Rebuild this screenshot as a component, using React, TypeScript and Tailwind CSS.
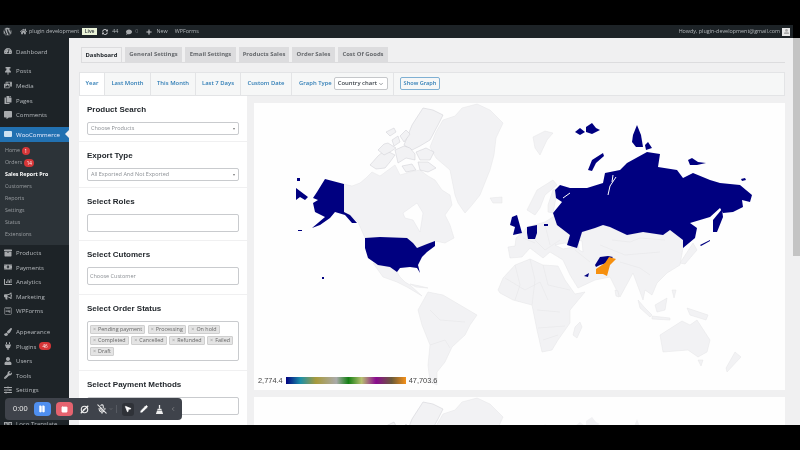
import { ChevronDown, ChevronLeft, MicOff, MousePointer2, Pause, Pencil, Square } from "lucide-react";
import type { IconType } from "react-icons";
import {
  FaArchive, FaBullhorn, FaChartBar, FaComment, FaCommentAlt, FaCopy, FaHome, FaLanguage, FaMoneyBillAlt,
  FaPaintBrush, FaPhotoVideo, FaPlug, FaPlus, FaSlidersH, FaSyncAlt, FaTachometerAlt, FaThumbtack, FaUser,
  FaUserAlt, FaWordpress, FaWrench, FaWpforms,
} from "react-icons/fa";

const sans = "font-['Open_Sans',sans-serif]";
const head = "font-['Liberation_Sans',Arial,sans-serif]";

type MenuRow = { label: string; icon: IconType; badge?: string };

const group1: MenuRow[] = [
  { label: "Posts", icon: FaThumbtack },
  { label: "Media", icon: FaPhotoVideo },
  { label: "Pages", icon: FaCopy },
  { label: "Comments", icon: FaCommentAlt },
];
const group2: MenuRow[] = [
  { label: "Products", icon: FaArchive },
  { label: "Payments", icon: FaMoneyBillAlt },
  { label: "Analytics", icon: FaChartBar },
  { label: "Marketing", icon: FaBullhorn },
  { label: "WPForms", icon: FaWpforms },
];
const group3: MenuRow[] = [
  { label: "Appearance", icon: FaPaintBrush },
  { label: "Plugins", icon: FaPlug, badge: "46" },
  { label: "Users", icon: FaUser },
  { label: "Tools", icon: FaWrench },
  { label: "Settings", icon: FaSlidersH },
];
const submenu = [
  { label: "Home", badge: "1" },
  { label: "Orders", badge: "14" },
  { label: "Sales Report Pro", active: true },
  { label: "Customers" },
  { label: "Reports" },
  { label: "Settings" },
  { label: "Status" },
  { label: "Extensions" },
];
const tabs = [
  { label: "General Settings", w: "w-[57px]" },
  { label: "Email Settings", w: "w-[51px]" },
  { label: "Products Sales", w: "w-[50px]" },
  { label: "Order Sales", w: "w-[43px]" },
  { label: "Cost Of Goods", w: "w-[50px]" },
];
const ranges = [
  { label: "Last Month", w: "w-[46px]" },
  { label: "This Month", w: "w-[45px]" },
  { label: "Last 7 Days", w: "w-[45px]" },
  { label: "Custom Date", w: "w-[51px]" },
];
const statuses = ["Pending payment", "Processing", "On hold", "Completed", "Cancelled", "Refunded", "Failed", "Draft"];

// rough outlines, in page pixels of the first chart panel
const land = [
  "344,184 352,186 360,183 366,178 372,172 380,176 395,165 400,175 410,172 420,170 428,176 435,180 442,190 450,195 452,205 445,215 450,225 454,238 445,243 435,241 427,244 417,248 413,243 407,238 365,238 358,222 350,215 344,212",
  "430,147 436,132 443,120 455,116 462,108 477,104 490,110 503,123 496,138 494,155 490,170 484,185 480,195 472,205 465,213 458,203 455,195 450,170 436,158",
  "490,198 502,197 502,203 493,203",
  "373,263 383,277 397,282 407,287 422,296 410,285 405,282 400,277 397,272 390,267 378,265",
  "410,284 420,286 428,288 416,287",
  "428,292 443,295 460,305 477,315 470,325 465,335 452,347 445,362 437,372 437,385 430,382 428,365 430,345 422,325 418,310",
  "498,290 503,278 515,265 530,259 543,265 558,266 565,280 575,294 585,292 570,310 570,323 558,340 552,350 542,352 537,330 532,305 513,300 500,293",
  "580,322 582,327 577,338 573,335 575,327",
  "508,247 515,246 516,238 523,232 527,227 545,222 556,215 557,225 570,235 567,245 577,248 582,232 595,228 603,225 610,227 627,235 643,232 663,235 670,230 683,240 683,248 680,265 667,273 657,283 652,295 645,290 643,300 633,273 620,297 610,277 595,280 578,288 570,275 563,260 550,252 543,258 530,248 522,257 510,258",
  "527,210 537,190 553,180 557,185 545,195 540,208 535,215",
  "548,205 553,190 558,188 556,198 553,213 548,212",
  "533,137 545,131 553,133 547,140 540,155 535,148",
  "693,243 697,250 685,264 680,263",
  "660,335 682,321 690,325 697,320 710,340 707,352 698,357 688,350 663,352",
  "698,360 703,360 701,366",
  "735,352 741,357 727,372 726,368",
  "638,300 645,308 652,315 650,317 640,308",
  "655,305 667,298 665,310 657,312",
  "652,316 670,318 670,320 652,319",
  "687,308 708,315 706,320 690,315",
  "672,290 676,290 674,298",
  "615,290 618,291 619,297 616,296",
];
// arctic islands of Canada, drawn with a darker coast
const arctic = [
  "423,108 433,110 443,115 438,125 430,140 420,146 412,150 404,145 408,135 412,125",
  "370,165 378,156 385,150 395,155 390,162 385,168 376,169",
  "395,150 404,146 410,148 415,154 415,160 406,158 398,163",
  "378,150 384,144 388,143 396,148 390,152 384,155",
  "400,136 406,130 410,134 404,142",
  "392,140 398,136 400,142 394,146",
  "416,152 426,148 434,152 430,160 420,160",
  "418,162 428,162 436,168 428,172 420,170",
  "402,166 412,164 416,170 406,172",
  "386,132 394,128 396,132 390,136",
];
const blue = [
  "365,238 380,237 407,238 413,243 417,248 427,244 435,241 435,246 427,252 422,257 418,265 420,273 417,268 410,267 400,268 397,272 390,267 378,265 368,258 365,248",
  "325,179 344,184 344,212 350,215 357,223 352,223 345,215 335,212 330,218 320,225 312,228 325,217 315,212 313,203 318,200 313,198 317,192",
  "296,188 308,197 305,200 300,197 296,200",
  "555,190 560,185 570,188 587,188 603,183 605,173 620,170 627,163 647,152 660,154 658,167 677,170 683,178 693,173 710,180 720,183 740,185 752,195 750,202 742,200 743,207 733,212 723,213 720,208 710,217 690,223 697,228 695,238 683,248 683,240 670,230 663,235 643,232 627,235 610,227 603,225 595,228 582,232 577,248 567,245 570,235 557,225 553,213 562,202 556,198",
  "722,209 723,217 717,232 713,232 713,220",
  "588,170 592,160 603,153 604,156 596,163 592,171",
  "633,135 637,125 641,135 643,147 636,147 632,142",
  "645,145 648,142 652,148 646,150",
  "575,132 580,128 585,132 580,135",
  "586,127 592,123 596,128 600,130 592,134 586,132",
  "688,160 692,158 698,162 706,163 697,165 690,165",
  "700,245 710,240 710,241 701,246",
  "741,179 745,178 746,180 742,181",
  "512,217 517,215 522,233 513,235 515,227 510,225",
  "527,227 537,225 537,233 535,239 528,239 527,233",
  "544,224 548,224 548,226 544,226",
  "595,265 600,257 608,256 613,257 607,263 600,265 596,267",
  "584,276 589,273 588,277",
];
const orange = "596,269 605,263 609,257 616,259 610,265 607,276 603,274 596,274";
const white = [
  "403,213 417,203 423,213 420,232 413,220 405,218",
  "555,245 565,243 573,247 563,249",
  "578,240 582,241 583,252 579,250",
];
const inlets = ["608,195 610,186 616,177", "563,198 570,193", "612,182 613,175"];
const borders = [
  "505,278 525,290 540,282 548,300",
  "515,265 520,285 515,300",
  "530,259 535,280 532,305",
  "543,265 548,285 570,290",
  "537,310 560,312",
  "538,328 565,326",
  "543,340 558,335",
  "600,245 625,255 660,252",
  "620,262 640,268 650,275",
  "535,240 545,250 560,240",
  "523,238 535,243",
  "545,225 550,245",
  "575,250 590,262",
  "430,310 440,320 465,322",
  "430,345 445,340 450,348",
  "612,240 630,242 640,238 665,240",
];

const WorldMap = ({ colored = true }: { colored?: boolean }) => {
  const mark = (c: string) => (colored ? c : "#f1f1f3");
  return (
    <svg viewBox="254 103 531 287" className="block w-[531px] h-[287px] shrink-0">
      <g fill="#f2f2f4" stroke="#e4e4e7" strokeWidth="0.5">
        {land.map((p) => <polygon key={p} points={p} />)}
      </g>
      <g fill="#f2f2f4" stroke="#cdcdd2" strokeWidth="0.5">
        {arctic.map((p) => <polygon key={p} points={p} />)}
      </g>
      <g fill="none" stroke="#e4e4e7" strokeWidth="0.5">
        {borders.map((p) => <polyline key={p} points={p} />)}
      </g>
      <g fill="#fefefe" stroke="#dedee2" strokeWidth="0.4">
        {white.map((p) => <polygon key={p} points={p} />)}
      </g>
      <g fill={mark("#000080")}>
        {blue.map((p) => <polygon key={p} points={p} />)}
        <rect x="297" y="178" width="3" height="3" />
        <rect x="298" y="230" width="4" height="1" />
        <rect x="322" y="277" width="2" height="2" />
      </g>
      {colored && (
        <g fill="none" stroke="#fefefe" strokeWidth="1">
          {inlets.map((p) => <polyline key={p} points={p} />)}
        </g>
      )}
      <polygon points={orange} fill={mark("#f6900f")} />
    </svg>
  );
};

const SideRow = ({ row }: { row: MenuRow }) => (
  <div className="h-[14.6px] shrink-0 flex items-center text-[#b4b8bc] text-[6.1px]">
    <row.icon className="w-[8px] h-[8px] ml-[4px] mr-[4px] text-[#a7aaad]" />
    <span>{row.label}</span>
    {row.badge && (
      <span className="ml-[3px] px-[3px] h-[8px] leading-[8px] rounded-full bg-[#d63638] text-white text-[4.5px]">{row.badge}</span>
    )}
  </div>
);

const Card = ({ title, children, className = "" }: { title: string; children?: React.ReactNode; className?: string }) => (
  <div className={`bg-white px-[8px] pt-[9px] shrink-0 ${className}`}>
    <div className={`${head} font-bold text-[8px] text-[#23282d] leading-[10px] mb-[7px]`}>{title}</div>
    {children}
  </div>
);

const SelectBox = ({ text }: { text: string }) => (
  <div className="h-[13px] border border-[#c9cbce] rounded-[2px] flex items-center justify-between pl-[3px] pr-[3px] text-[5.5px] text-[#8b8f94] bg-white">
    <span>{text}</span>
    <span className="w-0 h-0 border-x-[1.5px] border-x-transparent border-t-[2px] border-t-[#777]" />
  </div>
);

const App = () => (
  <div className={`${sans} w-[800px] h-[450px] bg-black overflow-hidden flex flex-col relative blur-[0.3px]`}>
    <div className="h-[25px] shrink-0" />
    <div className="h-[400px] shrink-0 flex">
      <div className="w-[793px] flex flex-col">
        {/* Admin bar */}
        <div className="h-[13px] shrink-0 bg-[#1d2327] text-[#b4b8bc] text-[5.4px] flex items-center">
          <FaWordpress className="w-[9px] h-[9px] ml-[3px] text-[#a7aaad]" />
          <FaHome className="w-[7px] h-[7px] ml-[8px] text-[#a7aaad]" />
          <span className="ml-[2px]">plugin development</span>
          <span className="ml-[3px] w-[15px] text-center h-[7px] leading-[7px] bg-[#eaf3d8] text-[#2c3338] font-semibold text-[5px]">Live</span>
          <FaSyncAlt className="w-[6px] h-[6px] ml-[5px] text-[#c3c4c7]" />
          <span className="ml-[4px]">44</span>
          <FaComment className="w-[6px] h-[6px] ml-[8px] text-[#a7aaad]" />
          <span className="ml-[3px] text-[#6b7075]">0</span>
          <FaPlus className="w-[6px] h-[6px] ml-[8px] text-[#c3c4c7]" />
          <span className="ml-[4px]">New</span>
          <span className="ml-[7px]">WPForms</span>
          <span className="ml-auto">Howdy, plugin-development@gmail.com</span>
          <span className="w-[8px] h-[8px] ml-[2px] mr-[3px] bg-[#e8e8e8] flex items-center justify-center">
            <FaUserAlt className="w-[5px] h-[5px] text-[#aaa]" />
          </span>
        </div>

        <div className="flex-1 flex min-h-0">
          {/* Sidebar */}
          <div className="w-[69px] shrink-0 bg-[#1d2327] overflow-hidden pt-[6px] flex flex-col">
            <SideRow row={{ label: "Dashboard", icon: FaTachometerAlt }} />
            <div className="h-[5px] shrink-0" />
            {group1.map((r) => <SideRow key={r.label} row={r} />)}
            <div className="h-[5px] shrink-0" />
            <div className="h-[14.6px] shrink-0 bg-[#2271b1] text-[#eef] text-[6.1px] flex items-center relative">
              <span className="w-[8px] h-[6px] ml-[4px] mr-[4px] bg-[#cfe3f2] rounded-[1px]" />
              WooCommerce
              <span className="absolute right-0 w-0 h-0 border-y-[4px] border-y-transparent border-r-[4px] border-r-[#f0f0f1]" />
            </div>
            <div className="bg-[#2c3338] pt-[3px] pb-[4px] shrink-0">
              {submenu.map((s) => (
                <div key={s.label} className={`h-[12.1px] flex items-center pl-[5px] text-[5.3px] ${s.active ? "text-white font-bold" : "text-[#9a9ea2]"}`}>
                  {s.label}
                  {s.badge && (
                    <span className="ml-[2px] px-[2.5px] h-[8px] leading-[8px] rounded-full bg-[#d63638] text-white text-[4.5px]">{s.badge}</span>
                  )}
                </div>
              ))}
            </div>
            {group2.map((r) => <SideRow key={r.label} row={r} />)}
            <div className="h-[6px] shrink-0" />
            {group3.map((r) => <SideRow key={r.label} row={r} />)}
            <div className="h-[19.4px] shrink-0" />
            <SideRow row={{ label: "Loco Translate", icon: FaLanguage }} />
          </div>

          {/* Content */}
          <div className="flex-1 min-w-0 bg-[#f0f0f1] pt-[9px] pl-[10px] pr-[8px] overflow-hidden">
            <div className="ml-[2px] h-[15.5px] flex gap-[3px] border-b border-[#dcdcde] text-[5.9px] font-bold">
              <div className="w-[41px] text-center h-[15.5px] leading-[14px] border border-b-0 border-[#dcdcde] text-[#23282d]">Dashboard</div>
              {tabs.map((t) => (
                <div key={t.label} className={`${t.w} text-center h-[15px] leading-[14px] bg-[#dcdcde] text-[#66696d] whitespace-nowrap`}>{t.label}</div>
              ))}
            </div>

            <div className="mt-[9px] h-[24px] flex items-center bg-[#f6f7f7] border border-[#e3e4e6] text-[5.9px] font-semibold text-[#2e7cb5]">
              <div className="w-[25px] h-full bg-white flex items-center justify-center border-r border-[#e3e4e6]">Year</div>
              {ranges.map((r) => (
                <div key={r.label} className={`${r.w} h-full flex items-center justify-center border-r border-[#e3e4e6] whitespace-nowrap`}>{r.label}</div>
              ))}
              <div className="h-full pl-[7px] w-[102px] flex items-center border-r border-[#e3e4e6] whitespace-nowrap">
                <span>Graph Type</span>
                <span className="ml-[2px] h-[13px] w-[54px] bg-white border border-[#c5c7ca] rounded-[2px] flex items-center justify-between pl-[3px] pr-[3px] text-[#3c434a] text-[5.9px]">
                  Country chart
                  <ChevronDown className="w-[6px] h-[6px]" />
                </span>
              </div>
              <div className="ml-[6px] h-[13px] w-[40px] flex items-center justify-center bg-[#f6f7f7] border border-[#7fb0d3] rounded-[2px] text-[5.6px] whitespace-nowrap">Show Graph</div>
            </div>

            <div className="flex gap-[7px] items-start">
              {/* Filters */}
              <div className="w-[168px] shrink-0 flex flex-col gap-[1px] pt-[0.5px]">
                <Card title="Product Search" className="h-[45px]">
                  <SelectBox text="Choose Products" />
                </Card>
                <Card title="Export Type" className="h-[45px]">
                  <SelectBox text="All Exported And Not Exported" />
                </Card>
                <Card title="Select Roles" className="h-[52px]">
                  <div className="h-[18px] border border-[#c9cbce] rounded-[2px]" />
                </Card>
                <Card title="Select Cutomers" className="h-[53px]">
                  <div className="h-[18px] border border-[#c9cbce] rounded-[2px] flex items-center pl-[2px] text-[5.5px] text-[#8b8f94]">Choose Customer</div>
                </Card>
                <Card title="Select Order Status" className="h-[75px]">
                  <div className="h-[40px] border border-[#c9cbce] rounded-[2px] pt-[3px] px-[2px] flex flex-wrap content-start gap-x-[2.5px] gap-y-[2.5px]">
                    {statuses.map((s) => (
                      <span key={s} className="h-[8.5px] leading-[7.5px] px-[2px] bg-[#e4e4e4] border border-[#cfcfcf] rounded-[1px] text-[5.4px] text-[#666] whitespace-nowrap">
                        <span className="text-[#999] mr-[2px]">×</span>{s}
                      </span>
                    ))}
                  </div>
                </Card>
                <Card title="Select Payment Methods" className="h-[60px]">
                  <div className="h-[18px] border border-[#c9cbce] rounded-[2px]" />
                </Card>
              </div>

              {/* Charts */}
              <div className="w-[531px] shrink-0 pt-[7px] flex flex-col gap-[7px]">
                <div className="relative h-[287px] bg-[#fefefe] overflow-hidden">
                  <WorldMap />
                  <div className={`${head} absolute left-[4px] top-[272px] flex items-center gap-[3px] text-[7.4px] text-[#444]`}>
                    <span>2,774.4</span>
                    <span className="w-[120px] h-[7px] bg-[linear-gradient(90deg,#000080_0%,#1c8fa8_12%,#a89a3c_25%,#aaaaaa_42%,#148014_52%,#b8c070_63%,#8a0a90_75%,#6a5a3a_88%,#f59018_100%)]" />
                    <span>47,703.6</span>
                  </div>
                </div>
                <div className="h-[287px] bg-[#fefefe] overflow-hidden">
                  <WorldMap colored={false} />
                </div>
              </div>
            </div>
          </div>
        </div>
      </div>

      {/* Page scrollbar */}
      <div className="w-[7px] shrink-0 bg-[#f0f0f1] flex flex-col">
        <div className="h-[13px] bg-black" />
        <div className="h-[218px] bg-[#c4c4c4]" />
      </div>
    </div>
    <div className="h-[25px] shrink-0" />

    {/* Recorder toolbar */}
    <div className="absolute left-[5px] top-[398px] w-[177px] h-[22px] bg-[#3f434b] rounded-[4px] flex items-center text-[#e8e8e8] z-10">
      <span className={`${head} ml-[8px] text-[7.5px]`}>0:00</span>
      <span className="ml-[6px] w-[17px] h-[14px] rounded-[4px] bg-[#4f8ff0] flex items-center justify-center">
        <Pause className="w-[8px] h-[8px] fill-white text-white" />
      </span>
      <span className="ml-[5px] w-[17px] h-[14px] rounded-[4px] bg-[#e5636f] flex items-center justify-center">
        <Square className="w-[7px] h-[7px] fill-white text-white" />
      </span>
      <svg viewBox="0 0 12 12" className="ml-[7px] w-[9px] h-[9px]" fill="none" stroke="#eee" strokeWidth="1.5">
        <circle cx="6" cy="6" r="4.3" />
        <path d="M1 11 11 1M4 7l4-3" />
      </svg>
      <MicOff className="ml-[8px] w-[10px] h-[10px]" strokeWidth={2.5} />
      <ChevronDown className="ml-[2px] w-[4px] h-[4px] text-[#aaa]" />
      <span className="ml-[3px] w-px h-[8px] bg-[#565a62]" />
      <span className="ml-[5px] w-[12px] h-[13px] rounded-[3px] bg-[#2f3238] flex items-center justify-center">
        <MousePointer2 className="w-[8px] h-[8px] fill-white text-white" />
      </span>
      <Pencil className="ml-[6px] w-[8px] h-[8px] fill-white text-white" />
      <svg viewBox="0 0 10 10" className="ml-[7px] w-[9px] h-[9px]" fill="#eee">
        <path d="M4.3 0h1.4v4H4.3zM3 4.2h4l.5 1.4h-5zM2.3 6h5.4L9 10H1z" />
      </svg>
      <ChevronLeft className="ml-[6px] w-[6px] h-[6px] text-[#aaa]" />
    </div>
  </div>
);

export default App;
